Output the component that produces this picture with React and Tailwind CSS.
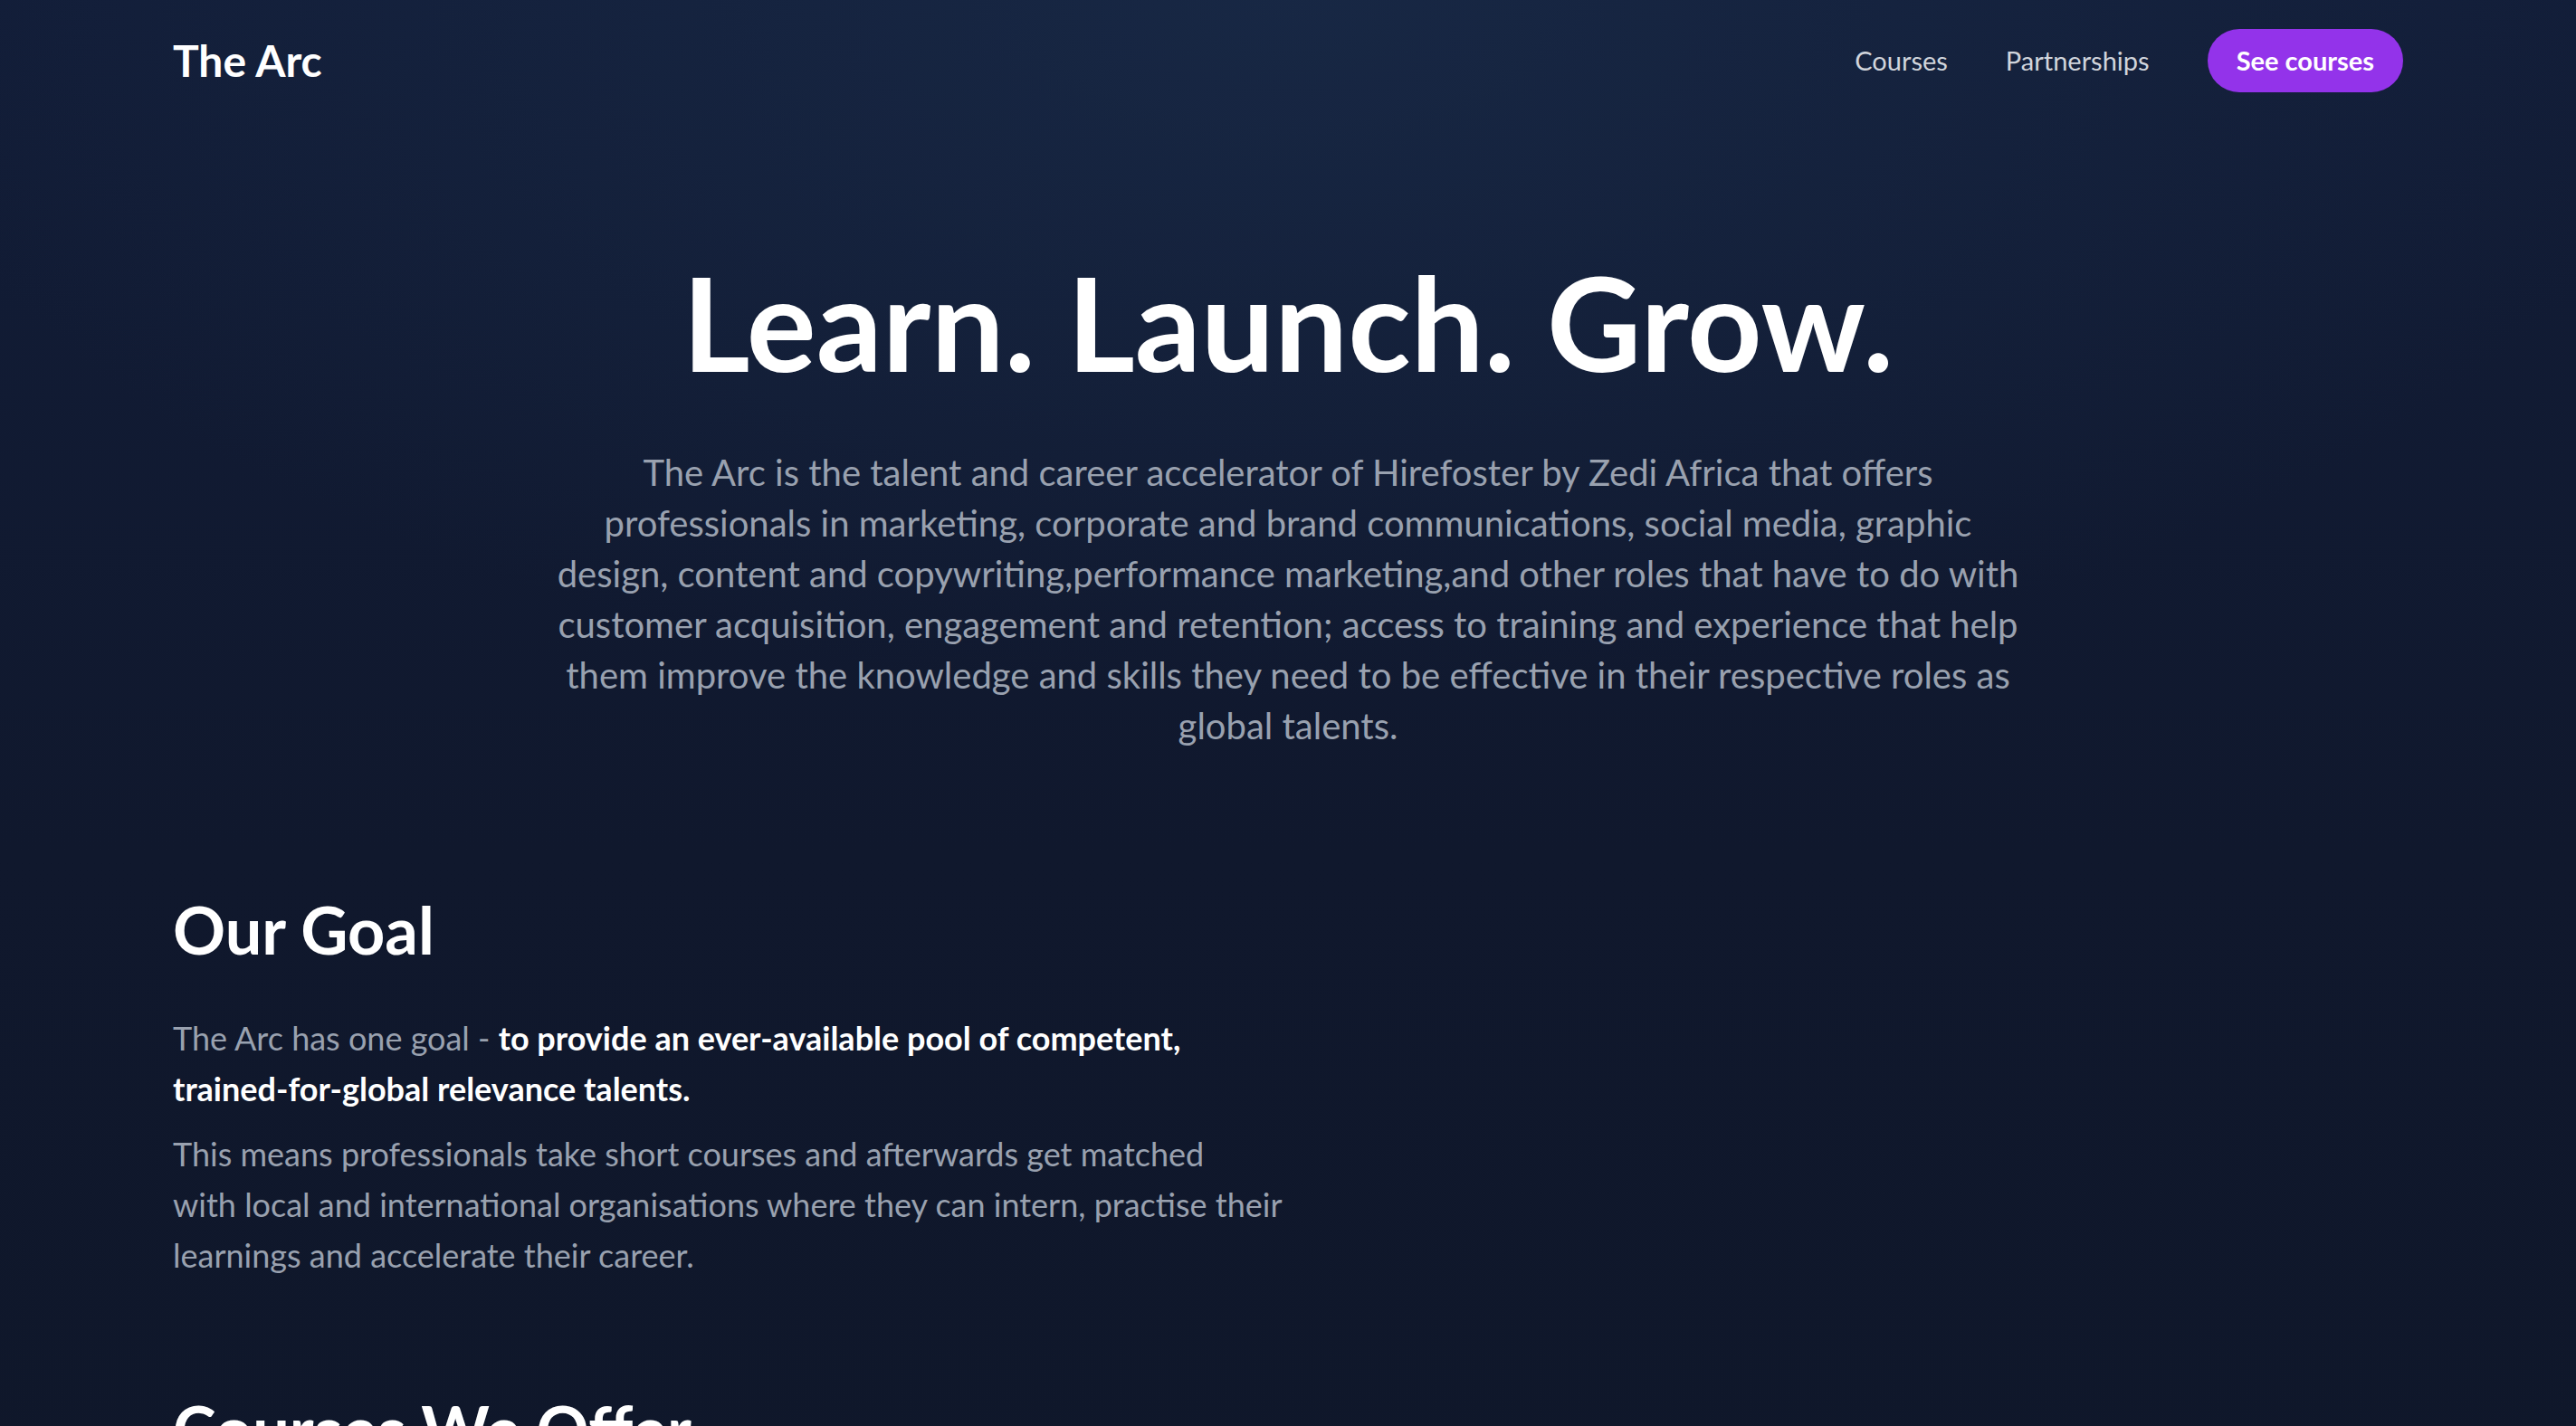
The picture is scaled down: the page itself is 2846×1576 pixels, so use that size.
import React from 'react';

export default function App() {
  return (
    <div
      className="min-h-screen text-white bg-[#0f172a] bg-[radial-gradient(ellipse_55%_45%_at_50%_0%,rgba(28,48,78,0.55),transparent),linear-gradient(to_bottom,#121d38,#10182d_55%,#0f172a)]"
      style={{ fontFamily: 'Lato, "Open Sans", sans-serif' }}
    >
      {/* Header */}
      <header className="max-w-[2560px] mx-auto px-12 py-8 flex items-center justify-between">
        <a href="#" className="text-[48px] font-bold leading-none">The Arc</a>
        <nav className="flex items-center gap-16">
          <a href="#" className="text-[29px] text-gray-300">Courses</a>
          <a href="#" className="text-[29px] text-gray-300">Partnerships</a>
          <a href="#" className="rounded-full bg-[#9333ea] px-8 py-3 text-[29px] leading-[46px] font-bold">See courses</a>
        </nav>
      </header>

      {/* Hero */}
      <section className="pt-[150px] text-center">
        <h1 className="text-[144px] font-bold leading-none">Learn. Launch. Grow.</h1>
        <p className="mt-[66px] max-w-[1632px] mx-auto text-[40px] leading-[56px] text-gray-400">
          The Arc is the talent and career accelerator of Hirefoster by Zedi Africa that offers professionals in marketing, corporate and brand communications, social media, graphic design, content and copywriting,performance marketing,and other roles that have to do with customer acquisition, engagement and retention; access to training and experience that help them improve the knowledge and skills they need to be effective in their respective roles as global talents.
        </p>
      </section>

      {/* Our Goal */}
      <section className="max-w-[2560px] mx-auto px-12 pt-[157px]">
        <h2 className="text-[72px] font-bold leading-[80px]">Our Goal</h2>
        <div className="w-[1240px]">
          <p className="mt-[52px] text-[36px] leading-[56px] text-gray-400">
            The Arc has one goal - <span className="font-bold text-white">to provide an ever-available pool of competent, trained-for-global relevance talents.</span>
          </p>
          <p className="mt-4 text-[36px] leading-[56px] text-gray-400">
            This means professionals take short courses and afterwards get matched<br />
            with local and international organisations where they can intern, practise their learnings and accelerate their career.
          </p>
        </div>
      </section>

      {/* Courses */}
      <section className="max-w-[2560px] mx-auto px-12 pt-[124px] pb-24">
        <h2 className="text-[72px] font-bold leading-[80px]">Courses We Offer</h2>
      </section>
    </div>
  );
}
